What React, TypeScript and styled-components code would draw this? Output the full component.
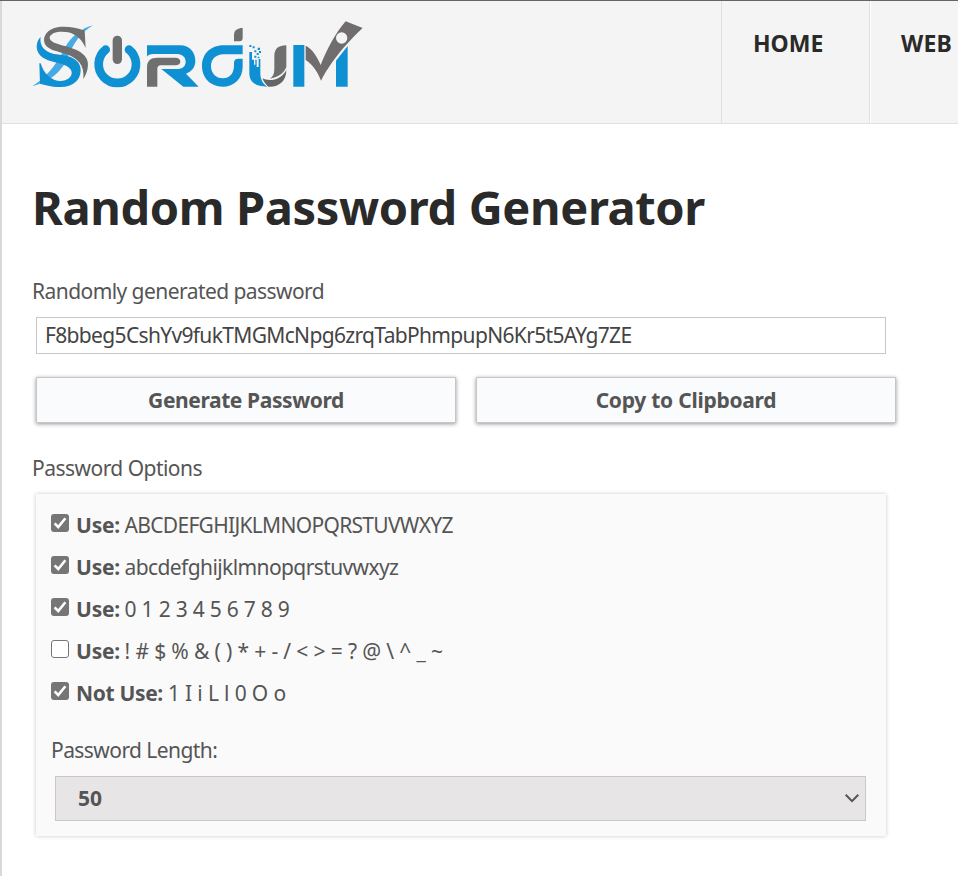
import React, { useState } from 'react';
import styled, { createGlobalStyle } from 'styled-components';

const GlobalStyle = createGlobalStyle`
  *, *::before, *::after { box-sizing: border-box; }
  body {
    margin: 0;
    background: #fff;
    color: #555;
    font-family: "Noto Sans", "Open Sans", sans-serif;
    font-size: 21px;
    overflow: hidden;
  }
`;

const Page = styled.div`
  height: 876px;
  width: 100%;
  overflow: hidden;
  display: flex;
  flex-direction: column;
  border-top: 1px solid #666466;
`;

const Body = styled.div`
  flex: 1;
  border-left: 2px solid #d9d9d9;
`;

const Header = styled.header`
  display: flex;
  justify-content: space-between;
  height: 123px;
  background: #f4f4f4;
  border-bottom: 1px solid #e0e0e0;
`;

const LogoLink = styled.a`
  display: block;
  padding: 9px 0 0 18px;
  svg { display: block; }
`;

const Nav = styled.nav`
  display: flex;
  width: 237px;
  overflow: hidden;
`;

const NavItem = styled.a<{ $spacing: number; $first?: boolean }>`
  flex: none;
  width: ${(p) => (p.$first ? 148 : 180)}px;
  padding: 27px 0 0 31px;
  border-left: 1px solid #e0e0e0;
  box-shadow: ${(p) => (p.$first ? 'none' : 'inset 1px 0 #fff')};
  color: #2a2a2a;
  font-size: 23px;
  font-weight: 700;
  line-height: 30px;
  letter-spacing: ${(p) => p.$spacing}px;
`;

const Main = styled.main`
  padding: 53px 0 0 30px;
`;

const Title = styled.h1`
  margin: 0 0 39px;
  color: #2a2a2a;
  font-size: 47px;
  font-weight: 700;
  line-height: 60px;
  letter-spacing: -0.38px;
  white-space: nowrap;
`;

const Label = styled.div<{ $spacing: number }>`
  line-height: 30px;
  letter-spacing: ${(p) => p.$spacing}px;
`;

const PasswordField = styled.input`
  display: block;
  width: 850px;
  height: 37px;
  margin: 11px 0 0 4px;
  padding: 0 8px 2px;
  border: 1px solid #c8c8c8;
  border-radius: 0;
  outline: none;
  background: #fff;
  color: #444;
  font: inherit;
  letter-spacing: -0.66px;
`;

const ButtonRow = styled.div`
  display: flex;
  gap: 20px;
  margin: 23px 0 30px 4px;
`;

const Button = styled.button<{ $spacing: number }>`
  width: 420px;
  height: 46px;
  padding: 0;
  border: 1px solid #c6c6c8;
  background: #fafbfd;
  box-shadow: 0 1px 4px rgba(0, 0, 0, 0.42);
  color: #555;
  font: inherit;
  font-weight: 700;
  letter-spacing: ${(p) => p.$spacing}px;
`;

const Panel = styled.section`
  width: 850px;
  height: 342px;
  margin: 11px 0 0 4px;
  padding: 10px 0 0 15px;
  background: #fafafa;
  box-shadow: 0 0 4px rgba(0, 0, 0, 0.22);
`;

const Option = styled.label`
  display: flex;
  align-items: center;
  height: 42px;
  white-space: nowrap;
`;

const HiddenCheck = styled.input`
  appearance: none;
  width: 0;
  height: 0;
  margin: 0;
`;

const Box = styled.span<{ $on: boolean }>`
  display: flex;
  width: 18px;
  height: 18px;
  margin: 0 7px 4px 0;
  border: ${(p) => (p.$on ? '0' : '1.5px solid #767676')};
  border-radius: 3px;
  background: ${(p) => (p.$on ? '#767676' : '#fff')};
`;

const Strong = styled.b<{ $spacing: number }>`
  letter-spacing: ${(p) => p.$spacing}px;
`;

const Chars = styled.span<{ $spacing: number; $gap: number }>`
  margin-left: ${(p) => p.$gap}px;
  letter-spacing: ${(p) => p.$spacing}px;
`;

const LengthLabel = styled(Label)`
  margin: 21px 0 11px;
`;

const Select = styled.div`
  display: flex;
  align-items: center;
  justify-content: space-between;
  width: 811px;
  height: 45px;
  margin-left: 4px;
  padding: 0 6px 2px 22px;
  border: 1px solid #c8c8c8;
  background: #e7e5e6;
  font-weight: 700;
`;

const BLUE = '#0e90d2';
const GRAY = '#706f6f';

const Logo = () => (
  <svg width="350" height="90" viewBox="0 0 1050 270" role="img" aria-label="Sordum">
    <path fill="#45aae6" d="M220 46C185 52 150 85 138 108C115 150 95 190 37 229C90 215 115 190 135 160C155 115 170 75 220 46Z" />
    <path
      fill={GRAY}
      d="M197 114L194 62C165 50 125 47 103 54C74 63 64 90 79 108C92 122 115 124 140 133C172 144 194 164 190 207C203 188 208 162 200 146C188 124 160 116 138 109C110 102 88 96 89 82C92 66 122 62 145 67C172 74 187 92 197 114Z"
    />
    <path
      fill={BLUE}
      d="M62 80C59 96 64 118 90 128C105 134 125 133 142 138C170 146 183 162 182 182C181 210 160 230 122 231C95 232 75 224 60 221L58 160L62 160C70 190 95 212 118 213C142 214 157 200 155 186C152 170 130 163 105 157C75 150 52 138 50 112C50 98 54 88 62 80Z"
    />
    <path fill="none" stroke={BLUE} strokeWidth="26" strokeLinecap="round" d="M257 119A56 56 0 1 0 327 119" />
    <path stroke={GRAY} strokeWidth="28" strokeLinecap="round" d="M292 91V148" />
    <path fill={BLUE} d="M381 106H480C510 106 526 128 526 152C526 172 515 184 498 191L536 230H490L424 177H470C488 177 497 168 497 155C497 140 485 132 468 132H400C390 132 384 135 381 140Z" />
    <path fill={GRAY} d="M381 230V172C381 152 392 143 412 143H466C486 143 486 166 466 166H425C415 166 412 170 412 180V230Z" />
    <g transform="translate(510 0)">
      <path fill={BLUE} d="M158 106V133H100C78 133 63 148 63 168C63 190 78 205 98 205C120 205 132 190 132 165V158C132 150 137 146 145 146H158V170C158 206 132 230 98 230C62 230 36 204 36 168C36 132 62 106 100 106Z" />
      <path fill={GRAY} d="M132 94V75C132 60 143 54 158 54V84C158 90 155 94 148 94Z" />
      <path fill={BLUE} d="M178 126H186V149H192V164H196V149H200V171H206V147H211V190C211 212 222 224 232 230C195 230 178 215 178 190Z" />
      <path fill={BLUE} d="M178 105h6v6h-6zM188 109h6v6h-6zM203 113h7v7h-7zM193 121h6v6h-6zM207 123h6v6h-6zM200 129h6v6h-6zM193 137h6v6h-6zM203 140h5v5h-5z" />
      <path fill={GRAY} d="M289 106V172C280 192 262 202 240 206C250 200 253 190 253 175V138C253 116 265 106 289 106Z" />
      <path fill="#636569" d="M217 205C240 217 276 208 289 180C289 215 265 232 235 230C228 224 221 216 217 205Z" />
      <path fill={BLUE} d="M310 105H343V230H310ZM438 230V152L473 108V230Z" />
      <path
        fill="#716d6e"
        fillRule="evenodd"
        d="M347 107C365 115 382 140 392 165C410 120 435 70 467 34L518 54C490 80 430 140 393 212C385 190 370 165 347 150ZM472 84A17 17 0 1 0 438 84A17 17 0 1 0 472 84Z"
      />
    </g>
  </svg>
);

const CheckMark = () => (
  <svg width="18" height="18" viewBox="0 0 18 18">
    <path d="M3.6 9.4L7.2 13L14.4 4.2" fill="none" stroke="#fff" strokeWidth="2.6" />
  </svg>
);

const Chevron = () => (
  <svg width="15" height="10" viewBox="0 0 15 10">
    <path d="M1.7 1.8L8 8.1L14.3 1.8" fill="none" stroke="#555" strokeWidth="2" />
  </svg>
);

type OptionData = { name: string; nameSpacing: number; chars: string; spacing: number; gap: number; on: boolean };

const OPTIONS: OptionData[] = [
  { name: 'Use:', nameSpacing: -0.2, chars: 'ABCDEFGHIJKLMNOPQRSTUVWXYZ', spacing: -0.7, gap: 4.5, on: true },
  { name: 'Use:', nameSpacing: -0.2, chars: 'abcdefghijklmnopqrstuvwxyz', spacing: -0.6, gap: 4.5, on: true },
  { name: 'Use:', nameSpacing: -0.2, chars: '0 1 2 3 4 5 6 7 8 9', spacing: -0.22, gap: 4.5, on: true },
  { name: 'Use:', nameSpacing: -0.2, chars: '! # $ % & ( ) * + - / < > = ? @ \\ ^ _ ~', spacing: -0.14, gap: 4.5, on: false },
  { name: 'Not Use:', nameSpacing: -0.34, chars: '1 I i L l 0 O o', spacing: -0.15, gap: 5, on: true },
];

export default function App() {
  const [checked, setChecked] = useState(OPTIONS.map((o) => o.on));
  const toggle = (index: number) => setChecked(checked.map((v, i) => (i === index ? !v : v)));

  return (
    <Page>
      <GlobalStyle />
      <Body>
        <Header>
          <LogoLink><Logo /></LogoLink>
          <Nav>
            <NavItem $first $spacing={0}>HOME</NavItem>
            <NavItem $spacing={0.2}>WEB</NavItem>
          </Nav>
        </Header>
        <Main>
          <Title>Random Password Generator</Title>
          <Label $spacing={-0.56}>Randomly generated password</Label>
          <PasswordField readOnly value="F8bbeg5CshYv9fukTMGMcNpg6zrqTabPhmpupN6Kr5t5AYg7ZE" />
          <ButtonRow>
            <Button $spacing={-0.4}>Generate Password</Button>
            <Button $spacing={-0.26}>Copy to Clipboard</Button>
          </ButtonRow>
          <Label $spacing={-0.53}>Password Options</Label>
          <Panel>
            {OPTIONS.map((o, i) => (
              <Option key={o.chars}>
                <HiddenCheck type="checkbox" checked={checked[i]} onChange={() => toggle(i)} />
                <Box $on={checked[i]}>{checked[i] && <CheckMark />}</Box>
                <Strong $spacing={o.nameSpacing}>{o.name}</Strong>
                <Chars $spacing={o.spacing} $gap={o.gap}>{o.chars}</Chars>
              </Option>
            ))}
            <LengthLabel $spacing={-0.57}>Password Length:</LengthLabel>
            <Select>
              50
              <Chevron />
            </Select>
          </Panel>
        </Main>
      </Body>
    </Page>
  );
}
